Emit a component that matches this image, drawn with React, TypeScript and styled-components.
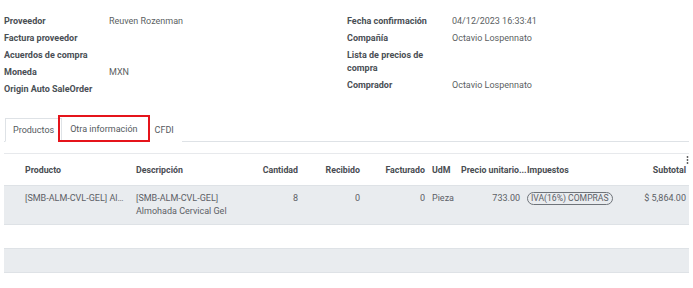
import styled, { createGlobalStyle } from "styled-components";

const GlobalStyle = createGlobalStyle`
  body {
    margin: 0;
    background: #ffffff;
    font-family: Roboto, "Liberation Sans", sans-serif;
    font-size: 9px;
    color: #5f6368;
  }
`;

const Page = styled.div`
  width: 693px;
  height: 288px;
  overflow: hidden;
  padding: 13px 4px 0 4px;
  box-sizing: border-box;
`;

const Fields = styled.div`
  display: grid;
  grid-template-columns: 343px 1fr;
`;

const FieldGroup = styled.div`
  display: flex;
  flex-direction: column;
`;

const Field = styled.div`
  display: grid;
  grid-template-columns: 105px 1fr;
  padding: 2px 0;
  line-height: 13px;
`;

const Label = styled.div`
  font-weight: 700;
  color: #4a4f55;
  padding-right: 6px;
`;

const Value = styled.div`
  color: #5c5f63;
`;

const Tabs = styled.div`
  margin-top: 19px;
  display: flex;
  align-items: flex-end;
  border-bottom: 1px solid #dee2e6;
  height: 24px;
  padding-left: 1px;
`;

const Tab = styled.div<{ $active?: boolean; $marked?: boolean }>`
  height: 24px;
  box-sizing: border-box;
  display: flex;
  align-items: center;
  padding: 0 7px;
  color: #555a60;
  margin-bottom: -1px;
  border: 1px solid ${(p) => (p.$active ? "#dee2e6" : "transparent")};
  border-bottom-color: ${(p) => (p.$active ? "#ffffff" : "transparent")};
  background: #ffffff;
  ${(p) =>
    p.$marked &&
    `
    border: 2px solid #e5141b;
    height: 27px;
    padding: 0 10px;
    margin: 0 -3px 0 -4px;
    position: relative;
    top: 1px;
    background: transparent;
  `}
`;

const Table = styled.table`
  margin-top: 11px;
  width: 685px;
  border-collapse: collapse;
  table-layout: fixed;
  border-top: 1px solid #e7e9ec;
`;

const HeadCell = styled.th<{ $right?: boolean; $w: number }>`
  box-sizing: border-box;
  width: ${(p) => p.$w}px;
  height: 32px;
  padding: 0 3px 0 4px;
  font-weight: 700;
  font-size: 8.8px;
  color: #494d52;
  text-align: ${(p) => (p.$right ? "right" : "left")};
  white-space: nowrap;
  overflow: visible;
  position: relative;
  border-bottom: 1px solid #dee2e6;
`;

const Row = styled.tr<{ $shade?: boolean; $h: number }>`
  height: ${(p) => p.$h}px;
  background: ${(p) => (p.$shade ? "#e9ecef" : "#ffffff")};
  border-bottom: 1px solid #dee2e6;
`;

const Cell = styled.td<{ $right?: boolean }>`
  box-sizing: border-box;
  padding: 6px 3px 6px 4px;
  vertical-align: top;
  line-height: 13px;
  color: #5c6066;
  text-align: ${(p) => (p.$right ? "right" : "left")};
  white-space: nowrap;
  overflow: hidden;
  text-overflow: ellipsis;
`;

const Wrap = styled.span`
  white-space: normal;
  display: block;
`;

const Badge = styled.span`
  display: inline-block;
  border: 1px solid #6f747a;
  border-radius: 7px;
  padding: 0 3px;
  font-size: 8.6px;
  line-height: 11px;
  color: #5c6066;
`;

const Kebab = styled.svg`
  position: absolute;
  top: 2px;
  right: 0;
`;

const columns: { title: string; w: number; right?: boolean }[] = [
  { title: "", w: 17 },
  { title: "Producto", w: 111 },
  { title: "Descripción", w: 108 },
  { title: "Cantidad", w: 61, right: true },
  { title: "Recibido", w: 62, right: true },
  { title: "Facturado", w: 65, right: true },
  { title: "UdM", w: 29 },
  { title: "Precio unitario...", w: 66 },
  { title: "Impuestos", w: 97 },
  { title: "Subtotal", w: 69, right: true },
];

export default function App() {
  return (
    <Page>
      <GlobalStyle />
      <Fields>
        <FieldGroup>
          <Field>
            <Label>Proveedor</Label>
            <Value>Reuven Rozenman</Value>
          </Field>
          <Field>
            <Label>Factura proveedor</Label>
            <Value />
          </Field>
          <Field>
            <Label>Acuerdos de compra</Label>
            <Value />
          </Field>
          <Field>
            <Label>Moneda</Label>
            <Value>MXN</Value>
          </Field>
          <Field>
            <Label>Origin Auto SaleOrder</Label>
            <Value />
          </Field>
        </FieldGroup>
        <FieldGroup>
          <Field>
            <Label>Fecha confirmación</Label>
            <Value>04/12/2023 16:33:41</Value>
          </Field>
          <Field>
            <Label>Compañía</Label>
            <Value>Octavio Lospennato</Value>
          </Field>
          <Field>
            <Label>Lista de precios de compra</Label>
            <Value />
          </Field>
          <Field>
            <Label>Comprador</Label>
            <Value>Octavio Lospennato</Value>
          </Field>
        </FieldGroup>
      </Fields>

      <Tabs>
        <Tab $active>Productos</Tab>
        <Tab $marked>Otra información</Tab>
        <Tab>CFDI</Tab>
      </Tabs>

      <Table>
        <thead>
          <tr>
            {columns.map((c, i) => (
              <HeadCell key={i} $w={c.w} $right={c.right}>
                {c.title}
                {i === columns.length - 1 && (
                  <Kebab width="3" height="8" viewBox="0 0 3 8">
                    <circle cx="1.5" cy="1" r="0.9" fill="#555" />
                    <circle cx="1.5" cy="4" r="0.9" fill="#555" />
                    <circle cx="1.5" cy="7" r="0.9" fill="#555" />
                  </Kebab>
                )}
              </HeadCell>
            ))}
          </tr>
        </thead>
        <tbody>
          <Row $shade $h={37}>
            <Cell />
            <Cell>[SMB-ALM-CVL-GEL] Almohada Cervical Gel</Cell>
            <Cell>
              <Wrap>[SMB-ALM-CVL-GEL] Almohada Cervical Gel</Wrap>
            </Cell>
            <Cell $right>8</Cell>
            <Cell $right>0</Cell>
            <Cell $right>0</Cell>
            <Cell>Pieza</Cell>
            <Cell $right>733.00</Cell>
            <Cell>
              <Badge>IVA(16%) COMPRAS</Badge>
            </Cell>
            <Cell $right>$ 5,864.00</Cell>
          </Row>
          <Row $h={24}>
            <Cell colSpan={10} />
          </Row>
          <Row $shade $h={24}>
            <Cell colSpan={10} />
          </Row>
        </tbody>
      </Table>
    </Page>
  );
}
